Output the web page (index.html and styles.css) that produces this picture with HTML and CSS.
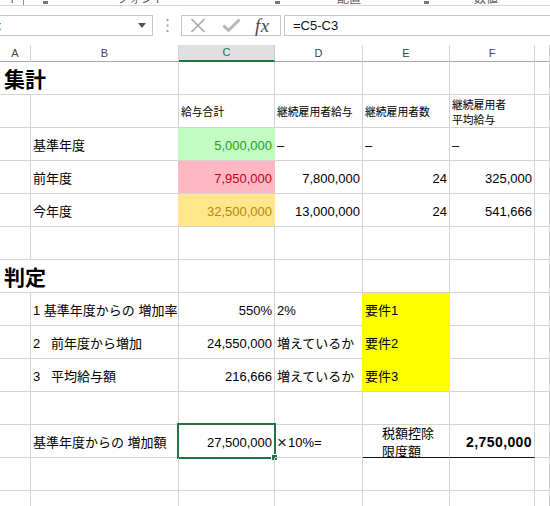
FILE: index.html
```html
<!DOCTYPE html>
<html lang="ja">
<head>
<meta charset="utf-8">
<link rel="stylesheet" href="styles.css">
</head>
<body>
<div class="ribbon">
  <span class="rl rl-1">ボード</span>
  <span class="tick"></span>
  <span class="launch l-1"></span>
  <span class="rl rl-2">フォント</span>
  <span class="launch l-2"></span>
  <span class="rl rl-3">配置</span>
  <span class="launch l-3"></span>
  <span class="rl rl-4">数値</span>
</div>

<div class="fbar">
  <div class="namebox">
    <span class="nb-text">:</span>
    <svg class="nb-arrow" width="8" height="5" viewBox="0 0 8 5"><path d="M0 0H8L4 5Z" fill="#555"/></svg>
  </div>
  <div class="dots">
    <svg width="3" height="13" viewBox="0 0 3 13"><rect x="0.5" y="0" width="2" height="2" fill="#a0a0a0"/><rect x="0.5" y="5.5" width="2" height="2" fill="#a0a0a0"/><rect x="0.5" y="11" width="2" height="2" fill="#a0a0a0"/></svg>
  </div>
  <div class="fxbox">
    <svg class="ic-x" width="16" height="15" viewBox="0 0 16 15"><path d="M1.5 1L14.5 14M14.5 1L1.5 14" stroke="#a9a9a9" stroke-width="1.6" fill="none"/></svg>
    <svg class="ic-ok" width="19" height="15" viewBox="0 0 19 15"><path d="M1.5 7.5L6.5 12.5L17.5 1.5" stroke="#b7b7b7" stroke-width="3" fill="none"/></svg>
    <span class="fx">fx</span>
  </div>
  <div class="formula">=C5-C3</div>
</div>

<div class="sheet">
  <div class="h">A</div><div class="h">B</div><div class="h h-sel">C</div><div class="h">D</div><div class="h">E</div><div class="h">F</div><div class="h"></div>

  <div class="c title span2">集計</div><div class="c"></div><div class="c"></div><div class="c"></div><div class="c"></div><div class="c"></div>

  <div class="c"></div><div class="c"></div><div class="c sm">給与合計</div><div class="c sm">継続雇用者給与</div><div class="c sm">継続雇用者数</div><div class="c sm two">継続雇用者<br>平均給与</div><div class="c"></div>

  <div class="c"></div><div class="c">基準年度</div><div class="c num good">5,000,000</div><div class="c">–</div><div class="c">–</div><div class="c">–</div><div class="c"></div>

  <div class="c"></div><div class="c">前年度</div><div class="c num bad">7,950,000</div><div class="c num">7,800,000</div><div class="c num">24</div><div class="c num">325,000</div><div class="c"></div>

  <div class="c"></div><div class="c">今年度</div><div class="c num neutral">32,500,000</div><div class="c num">13,000,000</div><div class="c num">24</div><div class="c num">541,666</div><div class="c"></div>

  <div class="c"></div><div class="c"></div><div class="c"></div><div class="c"></div><div class="c"></div><div class="c"></div><div class="c"></div>

  <div class="c title span2">判定</div><div class="c"></div><div class="c"></div><div class="c"></div><div class="c"></div><div class="c"></div>

  <div class="c"></div><div class="c pre">1 基準年度からの 増加率</div><div class="c num">550%</div><div class="c before-req">2%</div><div class="c req">要件1</div><div class="c"></div><div class="c"></div>

  <div class="c"></div><div class="c pre">2   前年度から増加</div><div class="c num">24,550,000</div><div class="c before-req">増えているか</div><div class="c req">要件2</div><div class="c"></div><div class="c"></div>

  <div class="c"></div><div class="c pre">3   平均給与額</div><div class="c num">216,666</div><div class="c before-req">増えているか</div><div class="c req req-last">要件3</div><div class="c"></div><div class="c"></div>

  <div class="c"></div><div class="c"></div><div class="c"></div><div class="c"></div><div class="c"></div><div class="c"></div><div class="c"></div>

  <div class="c"></div><div class="c pre">基準年度からの 増加額</div><div class="c num sel">27,500,000<span class="sel-box"></span><span class="sel-handle"></span></div><div class="c"><span class="times">×</span>10%=</div><div class="c ul label2">税額控除<br>限度額</div><div class="c num ul total">2,750,000</div><div class="c"></div>

  <div class="c"></div><div class="c"></div><div class="c"></div><div class="c"></div><div class="c"></div><div class="c"></div><div class="c"></div>

  <div class="c"></div><div class="c"></div><div class="c"></div><div class="c"></div><div class="c"></div><div class="c"></div><div class="c"></div>
</div>
</body>
</html>
```

FILE: styles.css
```css
html, body {
  margin: 0;
  height: 100%;
  overflow: hidden;
  background: #fff;
}
body {
  font-family: "Liberation Sans", "Noto Sans CJK JP", sans-serif;
  color: #000;
}

/* ribbon remnants */
.ribbon {
  display: flex;
  align-items: flex-end;
  height: 5px;
  overflow: hidden;
  border-bottom: 1px solid #d8d8d8;
}
.rl {
  font-size: 12px;
  line-height: 12px;
  color: #5a5a5a;
  white-space: nowrap;
  flex: none;
}
.rl-1 { margin-left: -16px; }
.rl-2 { margin-left: 69px; }
.rl-3 { margin-left: 57px; }
.rl-4 { margin-left: 45px; }
.tick {
  flex: none;
  width: 1px;
  height: 5px;
  background: #8a8a8a;
  margin-left: 3px;
}
.launch {
  flex: none;
  width: 5px;
  height: 3px;
  background: #777;
  margin-bottom: 1px;
}
.l-1 { margin-left: 19px; }
.l-2 { margin-left: 110px; }
.l-3 { margin-left: 63px; }

/* formula bar */
.fbar {
  display: flex;
  align-items: center;
  height: 21px;
  margin-top: 9px;
  margin-bottom: 9px;
}
.namebox {
  flex: none;
  box-sizing: border-box;
  width: 153px;
  height: 21px;
  border: 1px solid #c6c6c6;
  border-left: none;
  display: flex;
  align-items: center;
  justify-content: space-between;
  padding-right: 6px;
  font-size: 13px;
}
.nb-text {
  margin-left: -2px;
  color: #222;
}
.dots {
  flex: none;
  width: 28px;
  display: flex;
  justify-content: center;
  padding-left: 1px;
  box-sizing: border-box;
}
.dots svg { display: block; }
.fxbox {
  flex: none;
  box-sizing: border-box;
  width: 100px;
  height: 21px;
  border: 1px solid #c6c6c6;
  display: flex;
  align-items: center;
  padding-left: 8px;
}
.ic-x { display: block; }
.ic-ok { display: block; margin-left: 16px; }
.fx {
  margin-left: 14px;
  font-family: "Liberation Serif", serif;
  font-style: italic;
  font-size: 19px;
  color: #4a4a4a;
  line-height: 19px;
  letter-spacing: 0.5px;
}
.formula {
  flex: 1;
  box-sizing: border-box;
  height: 21px;
  margin-left: 3px;
  border: 1px solid #c6c6c6;
  border-right: none;
  padding-left: 8px;
  font-size: 13px;
  line-height: 19px;
  color: #111;
}

/* sheet */
.sheet {
  display: grid;
  grid-template-columns: 31px 148px 96px 88px 87px 85px 1fr;
  grid-template-rows: 17px repeat(14, 33px);
}
.h {
  box-sizing: border-box;
  border-right: 1px solid #d4d4d4;
  border-bottom: 1px solid #a8a8a8;
  font-size: 11px;
  line-height: 16px;
  text-align: center;
  color: #444;
}
.h-sel {
  background: #e0e0e0;
  color: #217346;
  border-right-color: #c8c8c8;
  border-bottom: 2px solid #217346;
  line-height: 15px;
}
.c {
  position: relative;
  box-sizing: border-box;
  border-right: 1px solid #d4d4d4;
  border-bottom: 1px solid #d4d4d4;
  display: flex;
  align-items: center;
  padding: 3px 2px 0 2px;
  font-size: 13px;
  line-height: 15px;
  white-space: nowrap;
}
.span2 { grid-column: span 2; }
.title {
  font-size: 21px;
  font-weight: bold;
  padding-left: 4px;
  line-height: 24px;
}
.sm {
  font-size: 10.8px;
  line-height: 15px;
}
.two { align-items: center; }
.num { justify-content: flex-end; }
.pre { white-space: pre; }

.good {
  background: #c2fcc2;
  color: #2a9d2a;
  border-right-color: #c2fcc2;
  box-shadow: -1px 0 0 #c2fcc2;
}
.bad {
  background: #ffb8c2;
  color: #c4001c;
  border-right-color: #ffb8c2;
  box-shadow: -1px 0 0 #ffb8c2;
}
.neutral {
  background: #ffe68a;
  color: #b3860c;
  border-right-color: #ffe68a;
  box-shadow: -1px 0 0 #ffe68a;
}
.before-req { border-right-color: #ffff00; }
.req {
  background: #ffff00;
  border-right-color: #ffff00;
  border-bottom-color: #ffff00;
}
.req-last { border-bottom-color: #d4d4d4; }

.sel-box {
  position: absolute;
  left: -2px;
  top: -2px;
  right: -2px;
  bottom: -2px;
  border: 2px solid #217346;
  pointer-events: none;
}
.sel-handle {
  position: absolute;
  right: -4px;
  bottom: -4px;
  width: 5px;
  height: 5px;
  background: #217346;
  border: 1px solid #fff;
}
.times {
  font-family: "Liberation Sans", sans-serif;
  font-size: 17px;
  font-weight: normal;
  margin-right: 1px;
  color: #222;
}
.ul { border-bottom-color: #111; }
.label2 {
  padding-left: 19px;
  line-height: 18px;
}
.total {
  font-weight: bold;
  font-size: 14px;
  letter-spacing: 0.4px;
  padding-right: 2px;
}
```
